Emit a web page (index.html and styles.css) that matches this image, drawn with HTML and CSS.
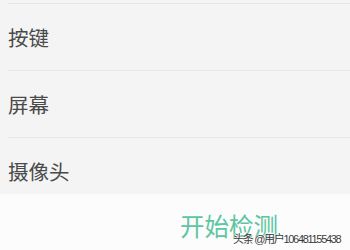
FILE: index.html
```html
<!DOCTYPE html>
<html lang="zh">
<head>
<meta charset="utf-8">
<link rel="stylesheet" href="styles.css">
</head>
<body>
<div class="screen">
  <ul class="list">
    <li class="row">按键</li>
    <li class="row">屏幕</li>
    <li class="row">摄像头</li>
  </ul>
  <div class="footer">
    <span class="start">开始检测</span>
  </div>
  <div class="watermark">头条 @用户106481155438</div>
</div>
</body>
</html>
```

FILE: styles.css
```css
html, body {
  margin: 0;
  padding: 0;
}
body {
  width: 350px;
  height: 250px;
  overflow: hidden;
  font-family: "Noto Sans CJK SC", "Noto Sans", sans-serif;
}
.screen {
  position: relative;
  width: 350px;
  height: 250px;
  background: #fcfcfc;
  display: flex;
  flex-direction: column;
}
.list {
  list-style: none;
  margin: 0;
  padding: 3px 0 0 8px;
  height: 190px;
  background: #f4f4f4;
  overflow: hidden;
  box-shadow: 0 1px 1px rgba(0,0,0,0.03);
}
.row {
  height: 67px;
  box-sizing: border-box;
  border-top: 1px solid #e6e6e6;
  display: flex;
  align-items: center;
  font-size: 20.5px;
  color: #4a4a4a;
  line-height: 1;
}
.footer {
  flex: 1;
  padding: 18px 0 0 180px;
}
.start {
  font-size: 24.5px;
  color: #5dc6a0;
  line-height: 1.2;
}
.watermark {
  position: absolute;
  left: 233px;
  top: 234px;
  font-size: 11px;
  line-height: 11px;
  color: #3a3a3a;
  font-family: "Liberation Sans", "Noto Sans CJK SC", sans-serif;
  text-shadow: 0 0 2px #fff, 0 0 2px #fff;
  letter-spacing: -1.3px;
  white-space: nowrap;
}
```
